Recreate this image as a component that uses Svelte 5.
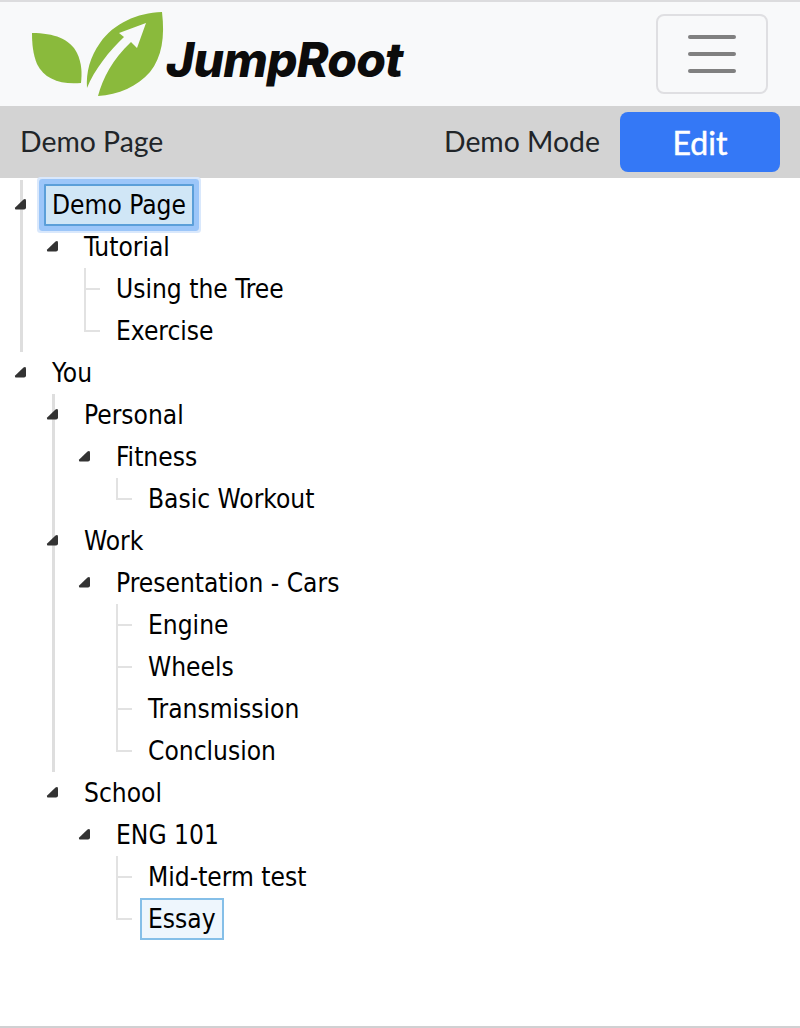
<script>
    const tree = [
        { label: "Demo Page", selected: true, children: [
            { label: "Tutorial", children: [
                { label: "Using the Tree" },
                { label: "Exercise" },
            ] },
        ] },
        { label: "You", children: [
            { label: "Personal", children: [
                { label: "Fitness", children: [{ label: "Basic Workout" }] },
            ] },
            { label: "Work", children: [
                { label: "Presentation - Cars", children: [
                    { label: "Engine" },
                    { label: "Wheels" },
                    { label: "Transmission" },
                    { label: "Conclusion" },
                ] },
            ] },
            { label: "School", children: [
                { label: "ENG 101", children: [
                    { label: "Mid-term test" },
                    { label: "Essay", hovered: true },
                ] },
            ] },
        ] },
    ];
</script>

{#snippet branch(nodes)}
    <ul>
        {#each nodes as node, i}
            <li class:parent={node.children} class:last={i === nodes.length - 1}>
                <div class="row">
                    {#if node.children}
                        <svg class="toggle" width="14" height="14" viewBox="0 0 14 14">
                            <path d="M9.5 1.5 Q11.8 0.2 12 2.5 V9.5 Q12 11.5 10 11.5 H2.5 Q0.3 11.5 1.2 9.5 Z" fill="#333" />
                        </svg>
                    {/if}
                    <span class="label" class:selected={node.selected} class:hovered={node.hovered}>{node.label}</span>
                </div>
                {#if node.children}
                    {@render branch(node.children)}
                {/if}
            </li>
        {/each}
    </ul>
{/snippet}

<div class="page">
    <nav class="navbar">
        <div class="brand">
            <svg class="leaves" width="134" height="86" viewBox="0 0 134 86">
                <path d="M0 21 C22 21 38 27 45 41 C50 51 50 62 49 71 C29 73 12 67 5 52 C1 42 0 32 0 21 Z" fill="#8aba3c" />
                <path d="M130 0 C133 25 130 45 118 60 C106 74 86 83 66 84 C71 66 80 48 99 30 L105 36 L114 11 L87 21 L92 25 C78 38 62 58 55 76 C54 60 58 45 68 31 C82 11 105 1 130 0 Z" fill="#8aba3c" />
            </svg>
            <span class="wordmark">JumpRoot</span>
        </div>
        <button class="toggler" aria-label="Menu">
            <span></span><span></span><span></span>
        </button>
    </nav>

    <div class="bar">
        <span class="title">Demo Page</span>
        <span class="mode">Demo Mode</span>
        <button class="edit">Edit</button>
    </div>

    <div class="tree">
        {@render branch(tree)}
    </div>
</div>

<style>
    :global(body) {
        background: #fff;
    }

    .page {
        display: flex;
        flex-direction: column;
        height: 1028px;
        box-sizing: border-box;
        border-top: 2px solid #dcdcde;
        border-bottom: 2px solid #d0d0d2;
        overflow: hidden;
    }

    .navbar {
        display: flex;
        align-items: center;
        justify-content: space-between;
        height: 104px;
        padding: 0 32px;
        box-sizing: border-box;
        background: #f8f9fa;
    }

    .brand {
        display: flex;
        align-items: flex-start;
        margin-top: 2px;
    }

    .leaves {
        display: block;
    }

    .wordmark {
        margin-top: 18px;
        font-family: Inter, sans-serif;
        font-weight: 800;
        font-style: italic;
        font-size: 48px;
        line-height: 60px;
        letter-spacing: -0.8px;
        color: #0c0c0c;
    }

    .toggler {
        display: flex;
        flex-direction: column;
        align-items: center;
        justify-content: center;
        gap: 13px;
        width: 112px;
        height: 80px;
        background: transparent;
        border: 2px solid #dfdfe2;
        border-radius: 8px;
        box-sizing: border-box;
    }

    .toggler span {
        width: 48px;
        height: 4px;
        border-radius: 2px;
        background: #808080;
    }

    .bar {
        display: flex;
        align-items: center;
        height: 72px;
        padding: 0 20px 2px;
        box-sizing: border-box;
        background: #d3d3d3;
        font-family: Lato, sans-serif;
        font-size: 28.4px;
        color: #212529;
    }

    .title {
        flex: 1;
    }

    .edit {
        width: 160px;
        height: 60px;
        margin: 2px 0 0 20px;
        border: none;
        border-radius: 8px;
        background: #3478f6;
        color: #fff;
        font-family: Lato, sans-serif;
        font-size: 32px;
        font-weight: 400;
        -webkit-text-stroke: 0.5px #fff;
    }

    .tree {
        padding-top: 6px;
        font-family: "DejaVu Sans", sans-serif;
        font-stretch: condensed;
        font-size: 26.1px;
        color: #000;
    }

    ul {
        list-style: none;
        margin: 0;
        padding: 0 0 0 32px;
    }

    .tree > ul {
        padding-left: 0;
    }

    li {
        position: relative;
    }

    /* vertical guide of a branch, runs on to the next sibling */
    li.parent:not(.last)::before {
        content: "";
        position: absolute;
        left: 20px;
        top: 0;
        bottom: 0;
        width: 3px;
        background: #dedede;
    }

    .tree > ul > li:first-child::before {
        top: -4px;
    }

    /* leaf connector, drawn as T or L */
    li:not(.parent)::before {
        content: "";
        position: absolute;
        left: 20px;
        top: 0;
        height: 22px;
        width: 16px;
        border-left: 2px solid #e2e2e2;
        border-bottom: 2px solid #e2e2e2;
        box-sizing: border-box;
    }

    li:not(.parent):not(.last)::after {
        content: "";
        position: absolute;
        left: 20px;
        top: 22px;
        bottom: 0;
        width: 2px;
        background: #e2e2e2;
    }

    .row {
        position: relative;
        display: flex;
        align-items: center;
        height: 42px;
        padding-left: 52px;
    }

    .toggle {
        position: absolute;
        left: 14px;
        top: 14px;
    }

    .label {
        position: relative;
        margin-left: -8px;
        padding: 0 6px;
        border: 2px solid transparent;
        line-height: 38px;
        white-space: nowrap;
    }

    .label.selected {
        background: #d0e6f6;
        border-color: #5b9fd9;
        border-radius: 1px;
        box-shadow: 0 0 0 5px #9cc6f9, 0 0 0 7px #d9e8fc;
    }

    .label.hovered {
        background: #eef6fd;
        border-color: #85bfe8;
    }
</style>
